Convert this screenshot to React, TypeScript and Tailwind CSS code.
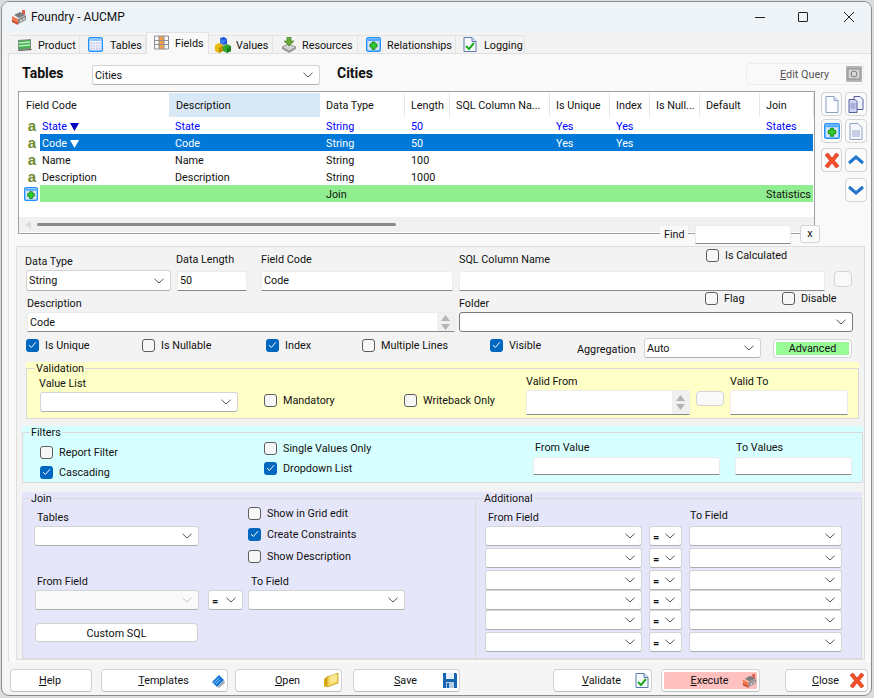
import React from "react";

const Chevron = ({ c = "#555" }: { c?: string }) => (
  <svg width="10" height="6" viewBox="0 0 10 6" className="shrink-0"><path d="M0.5 0.8 L5 5 L9.5 0.8" fill="none" stroke={c} strokeWidth="1" /></svg>
);

function Combo({ w, h = 20, value, disabled, small }: { w: number; h?: number; value?: string; disabled?: boolean; small?: boolean }) {
  return (
    <div style={{ width: w, height: h }} className={`flex shrink-0 items-center justify-between rounded-[3px] border border-[#d4d4d4] border-b-[#b0b0b0] pl-[2px] pr-[6px] ${disabled ? "bg-[#fafafa]" : "bg-white"}`}>
      <span className={small ? "pl-px pt-[2px] font-bold text-[11px] leading-none" : "pt-[2px]"}>{value}</span>
      <Chevron c={disabled ? "#c4c4c4" : "#555"} />
    </div>
  );
}

function Input({ w, h = 20, value, spin, low }: { w: number; h?: number; value?: string; spin?: boolean; low?: boolean }) {
  return (
    <div style={{ width: w, height: h }} className="flex shrink-0 items-center justify-between rounded-t-[3px] border border-[#ebebeb] border-b-[#8a8a8a] bg-white pl-[2px]">
      <span className={low ? "pt-[2px]" : ""}>{value}</span>
      {spin && (
        <div className="flex h-full w-[17px] flex-col items-center justify-center gap-[3px] bg-[#f0f0f0]">
          <svg width="9" height="6" viewBox="0 0 9 6"><path d="M4.5 0 L9 6 H0 Z" fill="#b4b4b4" /></svg>
          <svg width="9" height="6" viewBox="0 0 9 6"><path d="M4.5 6 L9 0 H0 Z" fill="#b4b4b4" /></svg>
        </div>
      )}
    </div>
  );
}

function Check({ label, checked }: { label: string; checked?: boolean }) {
  return (
    <div className="flex h-4 items-center gap-[6px] whitespace-nowrap">
      {checked ? (
        <span className="flex h-[13px] w-[13px] items-center justify-center rounded-[3px] bg-[#0067c0]">
          <svg width="9" height="8" viewBox="0 0 9 8"><path d="M1 4.2 L3.4 6.4 L8 1.2" fill="none" stroke="#fff" strokeWidth="1" /></svg>
        </span>
      ) : (
        <span className="h-[13px] w-[13px] rounded-[3px] border border-[#5d5d5d] bg-[#f7f7f7]" />
      )}
      <span className="pt-[2px]">{label}</span>
    </div>
  );
}

const Label = ({ children, className = "" }: { children: React.ReactNode; className?: string }) => (
  <div className={`h-4 whitespace-nowrap leading-[18px] ${className}`}>{children}</div>
);

function Group({ legend, legendX, bg, w, h, className = "", children }: { legend: string; legendX: number; bg: string; w: number; h: number; className?: string; children: React.ReactNode }) {
  return (
    <div style={{ width: w, height: h }} className={`shrink-0 pt-[6px] ${bg} ${className}`}>
      <div className="relative h-full border border-[#d9d9d9]">
        <span style={{ left: legendX }} className={`absolute top-[-7px] h-[14px] px-px leading-[14px] ${bg}`}>{legend}</span>
        {children}
      </div>
    </div>
  );
}

const FoundryIcon = ({ s = 16 }: { s?: number }) => (
  <svg width={s} height={s} viewBox="0 0 16 16">
    <path d="M11 1h3v5h-3z" fill="#d9604a" />
    <path d="M3 6 L9 3 L14 6 L8 9 Z" fill="#7c7c7c" />
    <path d="M1 7 L7 10 V15 L1 12 Z" fill="#ef7b4f" />
    <path d="M7 10 L15 6 V11 L7 15 Z" fill="#8b8b8b" />
    <path d="M9 11 l2-1 v2 l-2 1z M12 9.5 l2-1 v2 l-2 1z" fill="#d8d8d8" />
    <path d="M1 11 L7 14 V16 L1 13 Z" fill="#c9492f" />
  </svg>
);
const ProductIcon = () => (
  <svg width="16" height="16" viewBox="0 0 16 16">
    <path d="M1 3 L14 2 V12 L1 13 Z" fill="#7d8f7d" />
    <path d="M2 4 L13 3 V11 L2 12 Z" fill="#3fb54a" />
    <path d="M2 6 L13 5 M2 9 L13 8" stroke="#c7e8c7" strokeWidth="1.5" />
    <path d="M1 13 L14 12 L15 13 L2 14 Z" fill="#555" />
  </svg>
);
const TableIcon = () => (
  <svg width="15" height="15" viewBox="0 0 15 15">
    <rect x=".7" y=".7" width="13.6" height="13.6" rx="1.5" fill="#fff" stroke="#1e90ff" strokeWidth="1.4" />
    <rect x="2" y="2" width="11" height="2" fill="#8fc4ff" />
    <path d="M2.5 5h10v8h-10z" fill="#c9cdf0" />
    <path d="M5 5v8M7.5 5v8M10 5v8M2.5 7.5h10M2.5 10h10" stroke="#f2f2ff" />
  </svg>
);
const FieldsIcon = () => (
  <svg width="15" height="15" viewBox="0 0 15 15">
    <rect x="5" y="1" width="5" height="13" fill="#f5a149" />
    <path d="M.5 1h14v13H.5z M.5 5.5h14 M.5 9.5h14 M5 1v13 M10 1v13" fill="none" stroke="#8d8d96" />
  </svg>
);
const ValuesIcon = () => (
  <svg width="16" height="16" viewBox="0 0 16 16">
    <path d="M5 1 L9 0 L12 2 V7 L8 8 L5 6 Z" fill="#1f4fd6" />
    <path d="M5 1 L8 3 L12 2 L8 8 L5 6z" fill="#3e7bf2" />
    <path d="M0 8 L4 6 L8 8 V14 L4 16 L0 14 Z" fill="#e9b90e" />
    <path d="M4 11 L8 8 V14 L4 16 Z" fill="#b98d00" />
    <path d="M8 9 L12 7 L16 9 V14 L12 16 L8 14 Z" fill="#33a633" />
    <path d="M12 11 L16 9 V14 L12 16 Z" fill="#1d7d1d" />
  </svg>
);
const ResourceIcon = () => (
  <svg width="16" height="16" viewBox="0 0 16 16">
    <path d="M1 10 L8 7 L15 10 L8 14 Z" fill="#d4d4d4" stroke="#7a7a7a" strokeWidth=".7" />
    <path d="M1 10 V12 L8 16 L15 12 V10 L8 14 Z" fill="#9b9b9b" />
    <path d="M6 0 H10 V4 H13 L8 9 L3 4 H6 Z" fill="#6aa83a" stroke="#41761c" strokeWidth=".6" />
  </svg>
);
const RelIcon = ({ s = 15 }: { s?: number }) => (
  <svg width={s} height={s} viewBox="0 0 15 15">
    <rect x=".7" y=".7" width="13.6" height="13.6" rx="1.5" fill="#cfe4f7" stroke="#1e90ff" strokeWidth="1.4" />
    <rect x="2" y="2" width="11" height="2" fill="#55a8ff" />
    <path d="M6 5h3v2h2v3H9v2.4H6V10H4V7h2z" fill="#2fcf2f" stroke="#0c7a0c" strokeWidth=".8" />
  </svg>
);
const LogIcon = () => (
  <svg width="14" height="15" viewBox="0 0 14 15">
    <path d="M1 .5h8l4 4v10H1z" fill="#f8fafc" stroke="#5a7bb0" />
    <path d="M9 .5v4h4" fill="#dbe6f5" stroke="#5a7bb0" />
    <path d="M3 9 L6 12 L11 6" fill="none" stroke="#1faa1f" strokeWidth="2" />
  </svg>
);
const DocIcon = () => (
  <svg width="14" height="17" viewBox="0 0 14 17">
    <path d="M1 .5h8l4 4v12H1z" fill="#fbfdff" stroke="#8da2c8" />
    <path d="M9 .5v4h4" fill="#dfe8f5" stroke="#8da2c8" />
  </svg>
);
const CopyDocIcon = () => (
  <svg width="16" height="17" viewBox="0 0 16 17">
    <path d="M6 .5h6l3 3v10H6z" fill="#eef0fb" stroke="#56609c" />
    <path d="M1 3.5h6l2 2v11H1z" fill="#cfd5f0" stroke="#56609c" />
    <path d="M2.5 8h5M2.5 10h5M2.5 12h5" stroke="#7c86c0" />
  </svg>
);
const PageIcon = () => (
  <svg width="14" height="17" viewBox="0 0 14 17">
    <path d="M1 .5h8l4 4v12H1z" fill="#f5f7fb" stroke="#8da2c8" />
    <rect x="3" y="7" width="8" height="7" fill="#c4cfe6" />
  </svg>
);
const RedX = () => (
  <svg width="16" height="17" viewBox="0 0 16 17">
    <path d="M1 3 L4 1 L8 6 L12 1 L15 3 L10.5 8.5 L15 14 L12 16 L8 11 L4 16 L1 14 L5.5 8.5 Z" fill="#f4502a" stroke="#c23a1c" strokeWidth=".6" />
  </svg>
);
const ChevBlue = ({ up }: { up?: boolean }) => (
  <svg width="16" height="10" viewBox="0 0 16 10">
    <path d={up ? "M1 8 L8 2 L15 8" : "M1 2 L8 8 L15 2"} fill="none" stroke="#1f74cc" strokeWidth="3" />
  </svg>
);
const BookIcon = () => (
  <svg width="14" height="14" viewBox="0 0 14 14">
    <path d="M1 8 L8 1 L13 6 L6 13 Z" fill="#1277d6" />
    <path d="M3 9 L8 4 M5 10 L9 6" stroke="#8cc5f5" />
    <path d="M6 13 L13 6 L14 9 L8 14 Z" fill="#a9afb8" />
  </svg>
);
const FolderIcon = () => (
  <svg width="15" height="15" viewBox="0 0 15 15">
    <path d="M0 6 L4 3 V13 L0 14 Z" fill="#d9a814" />
    <path d="M3 4 L9 2 L14 0 V10 L3 14 Z" fill="#f7d75a" stroke="#b78d10" strokeWidth=".7" />
    <path d="M6 3 L13 1 V8 L6 11 Z" fill="#fbe88e" />
  </svg>
);
const SaveIcon = () => (
  <svg width="14" height="15" viewBox="0 0 14 15">
    <path d="M0 0H13L14 1V15H0Z" fill="#1565b0" />
    <rect x="3" y="0" width="8" height="6" fill="#e6eef7" />
    <rect x="3" y="9" width="8" height="6" fill="#b8cbe0" />
    <rect x="4" y="10" width="2" height="5" fill="#1565b0" />
  </svg>
);

function TabItem({ icon, label, w, active, gap, pad }: { icon: React.ReactNode; label: string; w: number; active?: boolean; gap: number; pad: number }) {
  return (
    <div
      style={{ width: w, gap, paddingLeft: pad }}
      className={`flex shrink-0 items-center border-t border-r border-[#e4e4e4] ${active ? "relative z-10 mb-[-1px] h-[22px] self-end border-l bg-[#f9f9f9] pb-[2px]" : "h-[18px] self-end bg-[#f3f3f3]"}`}
    >
      {icon}
      <span className="pt-[3px]">{label}</span>
    </div>
  );
}

const columns = [
  { w: 151, name: "Description" },
  { w: 85, name: "Data Type" },
  { w: 45, name: "Length" },
  { w: 100, name: "SQL Column Na..." },
  { w: 60, name: "Is Unique" },
  { w: 40, name: "Index" },
  { w: 50, name: "Is Null..." },
  { w: 60, name: "Default" },
  { w: 54, name: "Join" },
];

type Row = { code?: string; tri?: boolean; cells: string[]; cls: string; kind?: string };
const rows: Row[] = [
  { code: "State", tri: true, cells: ["State", "String", "50", "", "Yes", "Yes", "", "", "States"], cls: "text-[#0000ff]" },
  { code: "Code", tri: true, cells: ["Code", "String", "50", "", "Yes", "Yes", "", "", ""], cls: "bg-[#0078d7] text-white" },
  { code: "Name", cells: ["Name", "String", "100", "", "", "", "", "", ""], cls: "" },
  { code: "Description", cells: ["Description", "String", "1000", "", "", "", "", "", ""], cls: "" },
  { cells: ["", "Join", "", "", "", "", "", "", "Statistics"], cls: "bg-[#90ee90]", kind: "join" },
];

function Foot({ w, ml, u, rest, icon, pink }: { w: number; ml: number; u: string; rest: string; icon?: React.ReactNode; pink?: boolean }) {
  return (
    <div style={{ width: w, marginLeft: ml }} className="h-[23px] shrink-0 rounded-[4px] border border-[#d2d2d2] border-b-[#bdbdbd] bg-white p-[2px]">
      <div className={`grid h-full grid-cols-[1fr_auto_1fr] items-center rounded-[1px] ${pink ? "bg-[#ffc0c0]" : ""}`}>
        <span />
        <span className="pr-[2px] pt-[1px]"><span className="underline">{u}</span>{rest}</span>
        <span className="flex justify-end">{icon}</span>
      </div>
    </div>
  );
}

const ToolBtn = ({ w, children }: { w: number; children?: React.ReactNode }) => (
  <div style={{ width: w }} className="flex h-[24px] shrink-0 items-center justify-center rounded-[4px] border border-[#d4d4d4] bg-[#fbfbfb]">{children}</div>
);

export default function App() {
  return (
    <div className="h-[698px] w-[874px] overflow-hidden bg-[#dcdcdc] pl-px pt-px font-['Roboto','Liberation_Sans',sans-serif] text-[10.8px] text-[#111]">
      <div className="flex h-[695px] w-[871px] flex-col overflow-hidden rounded-[8px] border border-[#8c8c8c] bg-[#f5f5f5]">
        {/* Title bar */}
        <div className="flex h-[30px] shrink-0 items-center bg-[#eef3f8] pl-[9px]">
          <FoundryIcon />
          <span className="ml-[4px] text-[12px]">Foundry - AUCMP</span>
          <div className="ml-auto flex items-center">
            <span className="h-px w-[10px] bg-[#222]" />
            <span className="ml-[33px] h-[10px] w-[10px] rounded-[1px] border border-[#222]" />
            <svg className="ml-[36px] mr-[17px]" width="10" height="10" viewBox="0 0 10 10"><path d="M0 0L10 10M10 0L0 10" stroke="#222" strokeWidth="1" /></svg>
          </div>
        </div>
        {/* Tabs */}
        <div className="flex h-[21px] shrink-0 items-end bg-[#f3f3f3] pl-[8px]">
          <TabItem icon={<ProductIcon />} label="Product" w={70} pad={7} gap={5} />
          <TabItem icon={<TableIcon />} label="Tables" w={66} pad={8} gap={7} />
          <TabItem icon={<FieldsIcon />} label="Fields" w={63} pad={7} gap={6} active />
          <TabItem icon={<ValuesIcon />} label="Values" w={64} pad={6} gap={5} />
          <TabItem icon={<ResourceIcon />} label="Resources" w={85} pad={8} gap={5} />
          <TabItem icon={<RelIcon />} label="Relationships" w={98} pad={8} gap={6} />
          <TabItem icon={<LogIcon />} label="Logging" w={69} pad={7} gap={7} />
        </div>
        {/* Page */}
        <div className="ml-[6px] flex h-[609px] w-[863px] shrink-0 flex-col border-l border-t border-[#e0e0e0] bg-[#f9f9f9]">
          <div className="flex h-[37px] shrink-0 items-start">
            <span className="ml-[13px] mt-[10px] w-[70px] text-[14px] font-bold leading-[18px]">Tables</span>
            <div className="mt-[11px]"><Combo w={228} value="Cities" /></div>
            <span className="ml-[17px] mt-[10px] text-[14px] font-bold leading-[18px]">Cities</span>
            <div className="ml-[373px] mt-[9px] grid h-[22px] w-[118px] grid-cols-[1fr_16px] items-center rounded-[4px] border border-[#ededed] pr-[1px] text-[#555]">
              <span className="pl-[33px] pt-[2px]"><span className="underline">E</span>dit Query</span>
              <svg width="16" height="16" viewBox="0 0 16 16"><rect width="16" height="16" rx="1" fill="#b4b4b4" /><rect x="2" y="3" width="12" height="10" fill="#d6d6d6" stroke="#8c8c8c" /><circle cx="8" cy="8" r="3" fill="none" stroke="#7a7a7a" /></svg>
            </div>
          </div>
          {/* Grid + tools */}
          <div className="flex h-[143px] shrink-0">
            <div className="ml-[9px] flex h-[143px] w-[797px] shrink-0 flex-col border border-[#a0a0a0] bg-white">
              <div className="flex h-[25px] shrink-0 pt-px">
                <div className="flex w-[150px] shrink-0 items-center pl-[7px] pt-[2px]">Field Code</div>
                {columns.map((c, i) => (
                  <div key={c.name} style={{ width: c.w }} className={`flex shrink-0 items-center overflow-hidden whitespace-nowrap pt-[2px] ${i === 0 ? "bg-[#d9e8f5] pl-[7px]" : "border-r border-[#e6e6e6] pl-[6px]"}`}>{c.name}</div>
                ))}
              </div>
              {rows.map((r, ri) => (
                <div key={ri} className="flex h-[17px] shrink-0 items-center">
                  <div className="flex h-[17px] w-[21px] shrink-0 items-center justify-center pl-[5px]">
                    {r.kind === "join" ? <div className="-ml-[3px]"><RelIcon s={14} /></div> : <span className="font-['Liberation_Sans'] text-[15px] font-bold leading-none text-[#6e8b2e]">a</span>}
                  </div>
                  <div className={`flex h-[17px] items-center pt-[3px] ${r.cls}`}>
                    <div className="flex w-[129px] shrink-0 items-center gap-[3px] pl-[2px]">
                      <span>{r.code}</span>
                      {r.tri && <svg width="9" height="8" viewBox="0 0 9 8"><path d="M0 0H9L4.5 8Z" fill={r.cls.includes("text-white") ? "#fff" : "#0000c0"} /></svg>}
                    </div>
                    {r.cells.map((t, i) => (
                      <div key={i} style={{ width: i === 8 ? 53 : columns[i].w }} className="shrink-0 whitespace-nowrap pl-[6px]">{t}</div>
                    ))}
                  </div>
                </div>
              ))}
              <div className="mt-auto mb-px flex h-[15px] shrink-0 items-center bg-[#f0f0f0] pl-[6px]">
                <svg width="6" height="8" viewBox="0 0 6 8"><path d="M0 4L6 0V8Z" fill="#dcdcdc" /></svg>
                <div className="ml-[6px] h-[3px] w-[359px] rounded-full bg-[#8a8a8a]" />
              </div>
            </div>
            <div className="ml-[6px] flex flex-col pt-px">
              <div className="flex gap-[3px]"><ToolBtn w={21}><DocIcon /></ToolBtn><ToolBtn w={22}><CopyDocIcon /></ToolBtn></div>
              <div className="mt-[3px] flex gap-[3px]"><ToolBtn w={21}><RelIcon s={16} /></ToolBtn><ToolBtn w={22}><PageIcon /></ToolBtn></div>
              <div className="mt-[5px] flex gap-[3px]"><ToolBtn w={21}><RedX /></ToolBtn><ToolBtn w={22}><ChevBlue up /></ToolBtn></div>
              <div className="ml-[24px] mt-[6px]"><ToolBtn w={22}><ChevBlue /></ToolBtn></div>
            </div>
          </div>
          {/* Find row, laid over the lower edge of the grid */}
          <div className="relative z-10 -mt-[9px] ml-[651px] flex h-[19px] shrink-0 items-start">
            <span className="mt-[1px] h-4 w-[28px] bg-[#f9f9f9] pl-[4px] leading-[18px]">Find</span>
            <div className="ml-[7px]"><Input w={96} h={19} /></div>
            <div className="ml-[9px] flex h-[18px] w-[20px] items-center justify-center rounded-[3px] border border-[#d4d4d4] bg-[#fbfbfb]">x</div>
          </div>
          {/* Details panel */}
          <div className="ml-[7px] mt-[2px] flex h-[414px] w-[849px] shrink-0 flex-col border border-[#dedede] bg-[#f3f3f3]">
            {/* row 1 */}
            <div className="flex h-[44px] shrink-0 items-end">
              <div className="ml-[9px] w-[151px] shrink-0"><Label className="-ml-[1px] mb-px">Data Type</Label><Combo w={145} h={21} value="String" /></div>
              <div className="w-[84px] shrink-0"><Label className="-ml-[1px] mb-[4px]">Data Length</Label><Input w={70} value="50" /></div>
              <div className="w-[198px] shrink-0"><Label className="mb-[4px]">Field Code</Label><Input w={192} value="Code" /></div>
              <div className="w-[375px] shrink-0">
                <div className="mb-[4px] flex h-4 items-start">
                  <Label className="w-[247px]">SQL Column Name</Label>
                  <div className="-mt-[4px]"><Check label="Is Calculated" /></div>
                </div>
                <Input w={366} />
              </div>
              <div className="mb-[4px] h-[16px] w-[18px] shrink-0 rounded-[4px] border border-[#d6d6d6] bg-[#f9f9f9]" />
            </div>
            {/* row 2 */}
            <div className="-mt-px flex h-[42px] shrink-0 items-start">
              <div className="ml-[10px] w-[432px] shrink-0 pt-[5px]"><Label className="mb-px">Description</Label><Input w={428} value="Code" spin low /></div>
              <div className="w-[394px] shrink-0">
                <div className="flex h-[22px] items-start">
                  <Label className="mt-[5px] w-[246px]">Folder</Label>
                  <div className="w-[77px]"><Check label="Flag" /></div>
                  <Check label="Disable" />
                </div>
                <div className="flex h-[20px] items-center justify-between rounded-[3px] border border-[#7a7a7a] bg-white pr-[6px]"><span /><Chevron /></div>
              </div>
            </div>
            {/* row 3 */}
            <div className="flex h-[30px] shrink-0 items-start">
              <div className="ml-[9px] mt-[5px] w-[116px] shrink-0"><Check label="Is Unique" checked /></div>
              <div className="mt-[5px] w-[124px] shrink-0"><Check label="Is Nullable" /></div>
              <div className="mt-[5px] w-[96px] shrink-0"><Check label="Index" checked /></div>
              <div className="mt-[5px] w-[128px] shrink-0"><Check label="Multiple Lines" /></div>
              <div className="mt-[5px] w-[87px] shrink-0"><Check label="Visible" checked /></div>
              <div className="mt-[9px] w-[67px] shrink-0 leading-[18px]">Aggregation</div>
              <div className="mt-[6px] shrink-0"><Combo w={117} value="Auto" /></div>
              <div className="ml-[12px] mt-[7px] h-[19px] w-[79px] shrink-0 rounded-[4px] border border-[#d2d2d2] bg-white p-[2px]">
                <div className="flex h-full items-center justify-center bg-[#98fb98] pt-[2px]">Advanced</div>
              </div>
            </div>
            {/* Validation */}
            <Group legend="Validation" legendX={8} bg="bg-[#ffffc8]" w={833} h={57} className="ml-[9px]">
              <div className="flex items-start">
                <div className="ml-[13px] w-[198px] shrink-0 pt-[6px]"><Label className="-ml-px mb-px">Value List</Label><Combo w={198} /></div>
                <div className="ml-[26px] mt-[23px] w-[140px] shrink-0"><Check label="Mandatory" /></div>
                <div className="mt-[23px] w-[122px] shrink-0"><Check label="Writeback Only" /></div>
                <div className="w-[164px] shrink-0 pt-[4px]"><Label className="mb-px">Valid From</Label><Input w={164} h={25} spin /></div>
                <div className="ml-[6px] mt-[22px] h-[15px] w-[28px] shrink-0 rounded-[4px] border border-[#d4d4d4] bg-[#fafafa]" />
                <div className="ml-[6px] w-[118px] shrink-0 pt-[4px]"><Label className="mb-px">Valid To</Label><Input w={118} h={25} /></div>
              </div>
            </Group>
            {/* Filters */}
            <Group legend="Filters" legendX={7} bg="bg-[#d7ffff]" w={841} h={57} className="ml-[5px] mt-[7px]">
              <div className="flex items-start">
                <div className="ml-[17px] w-[224px] shrink-0 pt-[11px]"><Check label="Report Filter" /><div className="mt-[4px]"><Check label="Cascading" checked /></div></div>
                <div className="w-[269px] shrink-0 pt-[7px]"><Check label="Single Values Only" /><div className="mt-[4px]"><Check label="Dropdown List" checked /></div></div>
                <div className="w-[187px] shrink-0 pt-[6px]"><Label className="mb-[2px] ml-[2px]">From Value</Label><Input w={187} h={18} /></div>
                <div className="ml-[15px] w-[117px] shrink-0 pt-[6px]"><Label className="mb-[2px] ml-px">To Values</Label><Input w={117} h={18} /></div>
              </div>
            </Group>
            {/* Join */}
            <Group legend="Join" legendX={7} bg="bg-[#e6e6fa]" w={840} h={167} className="ml-[5px] mt-[9px]">
              <div className="flex h-full">
                <div className="w-[452px] shrink-0">
                  <div className="flex h-[74px] items-start">
                    <div className="ml-[11px] w-[214px] shrink-0 pt-[10px]"><Label className="mb-px ml-[3px]">Tables</Label><Combo w={165} /></div>
                    <div className="flex flex-col pt-[6px]">
                      <Check label="Show in Grid edit" />
                      <div className="mt-[5px]"><Check label="Create Constraints" checked /></div>
                      <div className="mt-[6px]"><Check label="Show Description" /></div>
                    </div>
                  </div>
                  <div className="flex h-[37px] items-end">
                    <div className="ml-[12px] w-[173px] shrink-0"><Label className="mb-px ml-[2px]">From Field</Label><Combo w={164} disabled /></div>
                    <div className="w-[40px] shrink-0"><Combo w={35} value="=" small /></div>
                    <div className="shrink-0"><Label className="mb-px ml-[3px]">To Field</Label><Combo w={157} /></div>
                  </div>
                  <div className="ml-[12px] mt-[13px] flex h-[19px] w-[163px] items-center justify-center rounded-[4px] border border-[#d0d0d0] bg-white pt-[3px]">Custom SQL</div>
                </div>
                <div className="relative flex-1 border-l border-[#d9d9d9]">
                  <span className="absolute left-[7px] top-[-7px] h-[14px] bg-[#e6e6fa] px-px leading-[14px]">Additional</span>
                  <div className="flex h-[27px] items-start">
                    <Label className="ml-[12px] mt-[10px] w-[202px]">From Field</Label>
                    <Label className="mt-[8px]">To Field</Label>
                  </div>
                  {[0, 2, 2, 0, 0, 2].map((m, i) => (
                    <div key={i} style={{ marginTop: m }} className="ml-[9px] flex h-[20px] items-start">
                      <Combo w={157} />
                      <div className="ml-[7px]"><Combo w={33} value="=" small /></div>
                      <div className="ml-[7px]"><Combo w={153} /></div>
                    </div>
                  ))}
                </div>
              </div>
            </Group>
          </div>
        </div>
        {/* Footer */}
        <div className="flex h-[33px] shrink-0 items-start pl-[8px] pt-[7px]">
          <Foot w={82} ml={0} u="H" rest="elp" />
          <Foot w={127} ml={9} u="T" rest="emplates" icon={<BookIcon />} />
          <Foot w={107} ml={7} u="O" rest="pen" icon={<FolderIcon />} />
          <Foot w={107} ml={11} u="S" rest="ave" icon={<SaveIcon />} />
          <Foot w={99} ml={93} u="V" rest="alidate" icon={<LogIcon />} />
          <Foot w={99} ml={9} u="E" rest="xecute" icon={<FoundryIcon s={15} />} pink />
          <Foot w={83} ml={25} u="C" rest="lose" icon={<RedX />} />
        </div>
      </div>
    </div>
  );
}
